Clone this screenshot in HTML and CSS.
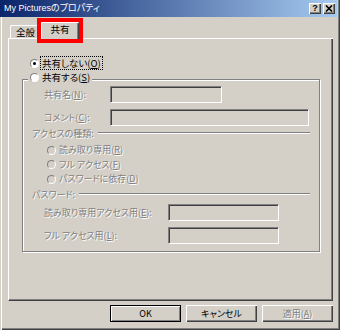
FILE: index.html
```html
<!DOCTYPE html>
<html lang="ja">
<head>
<meta charset="utf-8">
<title>My Picturesのプロパティ</title>
<link rel="stylesheet" href="styles.css">
</head>
<body>
<div class="window">
  <div class="titlebar">
    <span class="title">My Picturesのプロパティ</span>
    <span class="tbtn help">?</span>
    <span class="tbtn close"><svg width="8" height="7" viewBox="0 0 8 7"><path d="M1 0.5 L7 6.5 M7 0.5 L1 6.5" stroke="#000" stroke-width="1.6" fill="none"/></svg></span>
  </div>
  <div class="tabrow">
    <div class="tabline lead"></div>
    <div class="tab">全般</div>
    <div class="tab active">共有</div>
    <div class="tabline fill"></div>
    <div class="highlight"></div>
  </div>
  <div class="panel">
    <div class="opt first">
      <span class="radio checked"></span>
      <span class="focus">共有しない(<u>O</u>)</span>
    </div>
    <div class="group">
      <div class="opt legend"><span class="radio"></span><span class="txt">共有する(<u>S</u>)</span></div>
      <div class="field f1"><span class="lbl dis short">共有名(<u>N</u>):</span><span class="box w1"></span></div>
      <div class="field f2"><span class="lbl dis short">コメント(<u>C</u>):</span><span class="box w2"></span></div>
      <div class="sep s1"><span class="dis">アクセスの種類:</span><span class="line"></span></div>
      <div class="opt sub r1"><span class="radio off"></span><span class="txt dis">読み取り専用(<u>R</u>)</span></div>
      <div class="opt sub"><span class="radio off"></span><span class="txt dis">フル アクセス(<u>F</u>)</span></div>
      <div class="opt sub"><span class="radio off"></span><span class="txt dis">パスワードに依存(<u>D</u>)</span></div>
      <div class="sep s2"><span class="dis">パスワード:</span><span class="line"></span></div>
      <div class="field f3"><span class="lbl dis long">読み取り専用アクセス用(<u>E</u>):</span><span class="box w3"></span></div>
      <div class="field f4"><span class="lbl dis long">フル アクセス用(<u>L</u>):</span><span class="box w3"></span></div>
    </div>
  </div>
  <div class="buttons">
    <div class="btn default">OK</div>
    <div class="btn">キャンセル</div>
    <div class="btn"><span class="dis">適用(<u>A</u>)</span></div>
  </div>
</div>
</body>
</html>
```
FILE: styles.css
```css
html, body {
  margin: 0;
  padding: 0;
  background: #d4d0c8;
}
body {
  font-family: "Noto Sans CJK JP", "Liberation Sans", sans-serif;
  font-size: 9px;
  font-feature-settings: "palt";
  color: #000;
}
.window {
  width: 340px;
  height: 330px;
  box-sizing: border-box;
  background: #d4d0c8;
  box-shadow: inset 1px 0 0 #d4d0c8, inset 2px 0 0 #fff, inset -1px -1px 0 #404040, inset -2px -2px 0 #808080;
  overflow: hidden;
}
.titlebar {
  height: 17px;
  margin-right: 3px;
  display: flex;
  align-items: center;
  padding: 0 2px 0 4px;
  background: linear-gradient(to right, #0a246a, #a6caf0);
}
.title {
  flex: 1;
  color: #fff;
  font-family: "Liberation Sans", "Noto Sans CJK JP", sans-serif;
  font-size: 9px;
  line-height: 17px;
  white-space: nowrap;
}
.tbtn {
  width: 12px;
  height: 11px;
  box-sizing: border-box;
  background: #d4d0c8;
  box-shadow: inset 1px 1px 0 #fff, inset -1px -1px 0 #404040, inset -2px -2px 0 #808080;
  display: flex;
  align-items: center;
  justify-content: center;
  font-family: "Liberation Sans", sans-serif;
  font-weight: bold;
  font-size: 9px;
  line-height: 11px;
}
.help { margin-right: 2px; }
.close svg { display: block; }

.tabrow {
  position: relative;
  height: 22px;
  display: flex;
  align-items: flex-end;
  padding: 0 7px 0 8px;
}
.tabline {
  height: 0;
  border-bottom: 1px solid #fff;
}
.lead { width: 2px; }
.fill { flex: 1; }
.tab {
  width: 31px;
  height: 14px;
  box-sizing: border-box;
  border-left: 1px solid #fff;
  border-top: 1px solid #fff;
  border-right: 1px solid #404040;
  border-bottom: 1px solid #fff;
  border-radius: 2px 2px 0 0;
  box-shadow: inset -1px 0 0 #808080;
  text-align: center;
  line-height: 12px;
  font-size: 9.5px;
}
.tab.active {
  width: 38px;
  height: 17px;
  border-bottom: none;
  line-height: 12px;
  padding-bottom: 4px;
}
.highlight {
  position: absolute;
  left: 37px;
  top: 1px;
  width: 46px;
  height: 25px;
  box-sizing: border-box;
  border: 4px solid #f00;
}

.panel {
  margin: 0 7px 0 8px;
  height: 262px;
  box-sizing: border-box;
  border-left: 1px solid #fff;
  border-right: 1px solid #404040;
  border-bottom: 1px solid #404040;
  box-shadow: inset -1px -1px 0 #808080;
  padding-top: 17px;
}
.opt {
  display: flex;
  align-items: center;
  height: 14px;
  line-height: 12px;
}
.first { margin-left: 21px; font-size: 9.5px; }
.radio {
  width: 9px;
  height: 9px;
  box-sizing: border-box;
  border-radius: 50%;
  border: 1px solid;
  border-color: #808080 #fff #fff #808080;
  background: #fff;
  margin-right: 1px;
  display: flex;
  align-items: center;
  justify-content: center;
}
.radio.off { background: #d4d0c8; }
.radio.checked::after {
  content: "";
  width: 3px;
  height: 3px;
  border-radius: 50%;
  background: #000;
}
.focus {
  border: 1px dotted #000;
  padding: 0 1px;
  line-height: 12px;
}
.txt { padding: 0 2px; }
.legend .txt { font-size: 9.5px; }
.dis {
  color: #808080;
  text-shadow: 1px 1px 0 #fff;
}
.dis u { text-decoration-color: #808080; }

.group {
  margin: 9px 0 0 13px;
  width: 298px;
  box-sizing: border-box;
  border: 1px solid #808080;
  box-shadow: inset 1px 1px 0 #fff, 1px 1px 0 #fff;
  padding-bottom: 7px;
}
.legend {
  margin: -10px 0 0 5px;
  width: fit-content;
  padding-left: 2px;
  background: #d4d0c8;
}
.field {
  display: flex;
  align-items: center;
  margin-left: 21px;
}
.lbl { white-space: nowrap; }
.short { width: 66px; }
.long { width: 124px; }
.f1 { margin-top: 2px; }
.f2 { margin-top: 6px; }
.f3 { margin-top: 4px; }
.f4 { margin-top: 6px; }
.box {
  height: 17px;
  box-sizing: border-box;
  border: 1px solid;
  border-color: #808080 #fff #fff #808080;
  box-shadow: inset 1px 1px 0 #404040;
  background: #d4d0c8;
}
.w1 { width: 112px; }
.w2 { width: 199px; }
.w3 { width: 111px; }
.sep {
  display: flex;
  align-items: center;
  height: 12px;
  margin: 0 9px 0 9px;
  white-space: nowrap;
}
.s1 { margin-top: 1px; }
.s2 { margin-top: 1.5px; }
.line {
  flex: 1;
  height: 0;
  border-top: 1px solid #808080;
  border-bottom: 1px solid #fff;
  margin-left: 4px;
}
.sub {
  margin-left: 24px;
  height: 14.5px;
}
.r1 { margin-top: 4px; }

.buttons {
  display: flex;
  justify-content: flex-end;
  gap: 5px;
  margin-top: 4px;
  padding-right: 7px;
}
.btn {
  width: 71px;
  height: 17px;
  box-sizing: border-box;
  display: flex;
  align-items: center;
  justify-content: center;
  line-height: 12px;
  box-shadow: inset 1px 1px 0 #fff, inset -1px -1px 0 #404040, inset -2px -2px 0 #808080;
}
.btn.default {
  border: 1px solid #000;
  box-shadow: inset 1px 1px 0 #fff, inset -1px -1px 0 #808080;
}
```
